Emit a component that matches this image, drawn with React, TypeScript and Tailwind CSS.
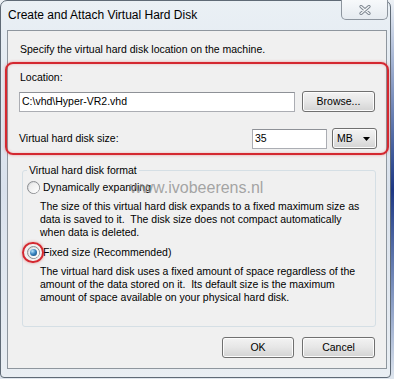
const Radio = ({ checked }: { checked?: boolean }) => (
  <div className="w-[13px] h-[13px] rounded-full border border-[#8b8d90] bg-linear-to-br from-[#d4d6d8] to-[#fbfbfb] flex items-center justify-center shrink-0">
    <div className="w-[10px] h-[10px] rounded-full bg-linear-to-br from-[#e9e9e9] to-[#ffffff] flex items-center justify-center">
      {checked && (
        <div className="w-[7px] h-[7px] rounded-full bg-[radial-gradient(circle_at_35%_30%,#b9e4fb_0%,#3a86c2_45%,#0e3f6e_100%)]" />
      )}
    </div>
  </div>
);

const WinButton = ({ label, width }: { label: string; width: string }) => (
  <div
    className={`${width} h-[21px] rounded-[3px] border border-[#707070] bg-linear-to-b from-[#f3f3f3] via-[#e6e6e6] to-[#d3d3d3] shadow-[inset_0_0_0_1px_#fcfcfc] flex items-center justify-center text-black`}
  >
    {label}
  </div>
);

const lines1 = [
  'The size of this virtual hard disk expands to a fixed maximum size as',
  'data is saved to it.  The disk size does not compact automatically',
  'when data is deleted.',
];

const lines2 = [
  'The virtual hard disk uses a fixed amount of space regardless of the',
  'amount of the data stored on it.  Its default size is the maximum',
  'amount of space available on your physical hard disk.',
];

export default function App() {
  return (
    <div className="w-[394px] h-[379px] overflow-hidden bg-linear-to-b from-[#eef2f6] via-[#1d3784] to-[#dfe6ee] font-['Liberation_Sans',Arial,sans-serif] text-[10.5px] leading-[13px] text-black">
      <div className="w-[391px] h-[378px] rounded-t-[7px] rounded-b-[4px] border border-[#5f6a76] bg-linear-to-b from-[#eaf0f5] via-[#d9e1ec] to-[#e9eef3] flex flex-col">
        {/* title bar */}
        <div className="h-[29px] flex items-start justify-between">
          <div className="pl-[7px] pt-[7px] text-[12px] leading-[15px]">Create and Attach Virtual Hard Disk</div>
          <div className="mr-[2px] -mt-[1px] w-[47px] h-[20px] rounded-b-[5px] border border-[#8d959e] border-t-0 bg-linear-to-b from-[#f7f9fb] to-[#e6ebf0] flex items-center justify-center">
            <svg width="12" height="10" viewBox="0 0 12 10">
              <path d="M2 1.5 L10 8.5 M10 1.5 L2 8.5" stroke="#7b848e" strokeWidth="3.2" strokeLinecap="round" />
              <path d="M2 1.5 L10 8.5 M10 1.5 L2 8.5" stroke="#f4f6f8" strokeWidth="1.4" strokeLinecap="round" />
            </svg>
          </div>
        </div>

        {/* client area */}
        <div className="ml-[6px] w-[380px] h-[339px] border border-[#8e969e] bg-[#f0f0f0] flex flex-col">
          <div className="pl-[12px] mt-[12px]">Specify the virtual hard disk location on the machine.</div>

          {/* highlighted location box */}
          <div className="-ml-[3px] w-[384px] mt-[6px] h-[93px] rounded-[8px] border-2 border-[#d42830] shadow-[0_0_3px_rgba(220,50,50,0.45),inset_0_0_3px_rgba(220,50,50,0.3)] pl-[12px] pr-[10px] pt-[7px] flex flex-col">
            <div className="ml-[1px]">Location:</div>
            <div className="mt-[7px] flex items-center gap-[7px]">
              <div className="w-[276px] h-[20px] border border-[#abadb3] border-t-[#8e9197] bg-white pl-[2px] flex items-center">
                C:\vhd\Hyper-VR2.vhd
              </div>
              <WinButton label="Browse..." width="w-[73px]" />
            </div>
            <div className="mt-[16px] flex items-center">
              <div className="flex-1">Virtual hard disk size:</div>
              <div className="w-[75px] h-[20px] border border-[#abadb3] border-t-[#8e9197] bg-white pl-[2px] flex items-center">
                35
              </div>
              <div className="ml-[5px] w-[45px] h-[21px] rounded-[3px] border border-[#707070] bg-linear-to-b from-[#f3f3f3] via-[#e6e6e6] to-[#d3d3d3] shadow-[inset_0_0_0_1px_#fcfcfc] flex items-center justify-between pl-[4px] pr-[6px]">
                <span>MB</span>
                <svg width="7" height="4" viewBox="0 0 7 4">
                  <path d="M0 0 H7 L3.5 4 Z" fill="#000" />
                </svg>
              </div>
            </div>
          </div>

          {/* format group */}
          <fieldset className="ml-[14px] w-[354px] mt-[9px] h-[163px] border border-[#d5dfe5] rounded-[3px] px-0 pt-[4px] pb-0 m-0">
            <legend className="ml-[4px] px-[2px]">Virtual hard disk format</legend>
            <div className="relative ml-[4px] flex items-center gap-[3px] h-[13px]">
              <Radio />
              <span>Dynamically expanding</span>
              <span className="absolute left-[103px] top-[-3px] text-[16px] leading-[19px] text-[#8f8f8f]/80">www.ivobeerens.nl</span>
            </div>
            <div className="ml-[17px] mt-[6px]">
              {lines1.map((l) => (
                <div key={l} className="whitespace-pre">{l}</div>
              ))}
            </div>
            <div className="relative ml-[4px] mt-[7px] flex items-center gap-[3px] h-[13px]">
              <Radio checked />
              <span>Fixed size (Recommended)</span>
              <div className="absolute left-[-5px] top-[-4px] w-[22px] h-[21px] rounded-full border-2 border-[#d42830] shadow-[0_0_3px_rgba(220,50,50,0.5)]" />
            </div>
            <div className="ml-[17px] mt-[6px]">
              {lines2.map((l) => (
                <div key={l} className="whitespace-pre">{l}</div>
              ))}
            </div>
          </fieldset>

          {/* buttons */}
          <div className="mt-[10px] pr-[11px] flex justify-end gap-[8px]">
            <WinButton label="OK" width="w-[72px]" />
            <WinButton label="Cancel" width="w-[73px]" />
          </div>
        </div>
      </div>
    </div>
  );
}
